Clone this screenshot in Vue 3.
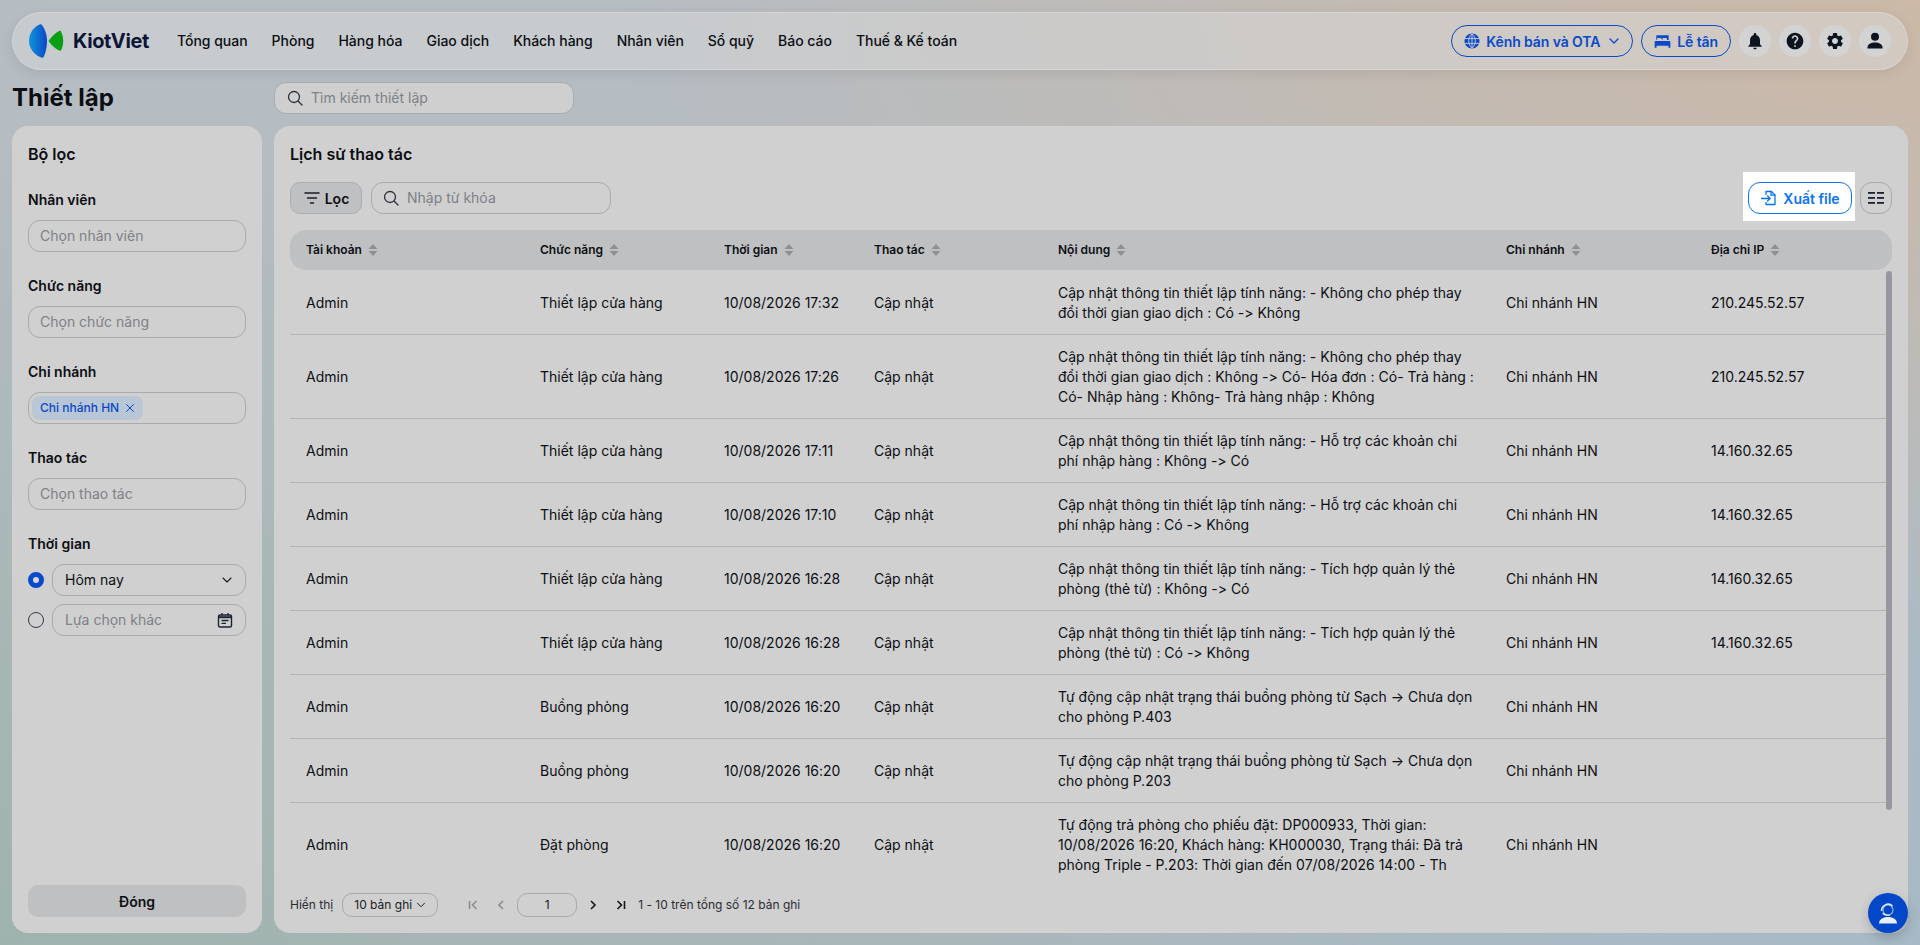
<template>
  <div class="page">
    <!-- Top nav -->
    <header class="topbar">
      <div class="logo">
        <svg width="36" height="36" viewBox="0 0 36 36">
          <defs>
            <linearGradient id="lgBlue" x1="0" x2="1" y1="0" y2="0">
              <stop offset="0" stop-color="#1196d8" />
              <stop offset="1" stop-color="#0a46c8" />
            </linearGradient>
          </defs>
          <path d="M12 1C5 3 0 10 0 18c0 8 6 15 14 17 2.500-4 4-11 4-17 0-7-2.500-13-6-17z" fill="url(#lgBlue)" />
          <path d="M19.500 18c3.500-5 7.500-9 12-10.500 2 3.500 2.700 7 2.700 10.500s-.7 7-2.700 10c-4.500-1.500-8.500-5-12-10z" fill="#05a014" />
        </svg>
        <span class="logo-text">KiotViet</span>
      </div>
      <nav class="nav">
        <a v-for="item in navItems" :key="item" class="nav-item">{{ item }}</a>
      </nav>
      <div class="top-actions">
        <button class="pill">
          <svg width="16" height="16" viewBox="0 0 18 18">
            <circle cx="9" cy="9" r="8.500" fill="#0a49c9" />
            <path d="M1 6.300h16M1 11.700h16M9 1v16M9 1c-5 4-5 12 0 16M9 1c5 4 5 12 0 16" stroke="#d2d2d2" stroke-width="1" fill="none" />
          </svg>
          Kênh bán và OTA
          <svg width="12" height="12" viewBox="0 0 12 12" class="pill-chev">
            <path d="M2 4l4 4 4-4" stroke="#0a49c9" stroke-width="1.300" fill="none" stroke-linecap="round" stroke-linejoin="round" />
          </svg>
        </button>
        <button class="pill">
          <svg width="17" height="17" viewBox="0 0 18 18" fill="#0a49c9">
            <path d="M2.500 2.500h13v5h-1.800V6.200a1 1 0 0 0-1-1H10a1 1 0 0 0-1 1V7.500a1 1 0 0 0-1-1V6.200a1 1 0 0 0-1-1H4.300a1 1 0 0 0-1 1v1.300H2.500z" />
            <path d="M1.500 8.500h15a1 1 0 0 1 .8 1v6h-2v-2H2.700v2H.7v-6a1 1 0 0 1 .8-1z" />
          </svg>
          Lễ tân
        </button>
        <button class="round">
          <svg width="20" height="20" viewBox="0 0 24 24" fill="#0d1420"><path d="M12 22c1.100 0 2-.9 2-2h-4c0 1.100.9 2 2 2zm6-6v-5c0-3.070-1.630-5.640-4.500-6.320V4c0-.83-.67-1.500-1.500-1.500s-1.500.67-1.500 1.500v.68C7.640 5.360 6 7.920 6 11v5l-2 2v1h16v-1l-2-2z" /></svg>
        </button>
        <button class="round">
          <svg width="20" height="20" viewBox="0 0 24 24" fill="#0d1420"><path d="M12 2C6.480 2 2 6.480 2 12s4.480 10 10 10 10-4.480 10-10S17.520 2 12 2zm1 17h-2v-2h2v2zm2.070-7.750l-.9.92C13.450 12.900 13 13.500 13 15h-2v-.5c0-1.100.45-2.100 1.170-2.830l1.240-1.260c.37-.36.59-.86.59-1.410 0-1.100-.9-2-2-2s-2 .9-2 2H8c0-2.210 1.790-4 4-4s4 1.790 4 4c0 .88-.36 1.680-.93 2.250z" /></svg>
        </button>
        <button class="round">
          <svg width="20" height="20" viewBox="0 0 24 24" fill="#0d1420"><path d="M19.140 12.940c.04-.3.06-.61.06-.94 0-.32-.02-.64-.07-.94l2.030-1.580c.18-.14.23-.41.12-.61l-1.920-3.320c-.12-.22-.37-.29-.59-.22l-2.390.96c-.5-.38-1.030-.7-1.620-.94l-.36-2.540c-.04-.24-.24-.41-.48-.41h-3.840c-.24 0-.43.17-.47.41l-.36 2.540c-.59.24-1.130.57-1.620.94l-2.390-.96c-.22-.08-.47 0-.59.22L2.740 8.870c-.12.21-.08.47.12.61l2.030 1.580c-.05.3-.09.63-.09.94s.02.64.07.94l-2.030 1.580c-.18.14-.23.41-.12.61l1.920 3.320c.12.22.37.29.59.22l2.390-.96c.5.38 1.030.7 1.620.94l.36 2.540c.05.24.24.41.48.41h3.840c.24 0 .44-.17.47-.41l.36-2.540c.59-.24 1.130-.56 1.620-.94l2.390.96c.22.08.47 0 .59-.22l1.920-3.320c.12-.22.07-.47-.12-.61l-2.010-1.580zM12 15.600c-1.980 0-3.600-1.620-3.600-3.600s1.620-3.600 3.600-3.600 3.600 1.620 3.600 3.600-1.620 3.600-3.600 3.600z" /></svg>
        </button>
        <button class="round">
          <svg width="20" height="20" viewBox="0 0 20 20" fill="#0d1420">
            <circle cx="10" cy="5.800" r="4" />
            <path d="M2.500 17.500v-1.300c0-3 3.500-4.700 7.500-4.700s7.500 1.700 7.500 4.700v1.300z" />
          </svg>
        </button>
      </div>
    </header>

    <!-- Title row -->
    <div class="title-row">
      <h1 class="page-title">Thiết lập</h1>
      <div class="search search-top">
        <svg width="18" height="18" viewBox="0 0 18 18" fill="none"><circle cx="8" cy="8" r="5.500" stroke="#2b2f38" stroke-width="1.300" /><path d="M12.200 12.200L16 16" stroke="#2b2f38" stroke-width="1.300" stroke-linecap="round" /></svg>
        <span class="placeholder">Tìm kiếm thiết lập</span>
      </div>
    </div>

    <div class="content">
      <!-- Filter sidebar -->
      <aside class="sidebar">
        <h2 class="panel-title">Bộ lọc</h2>
        <div class="filters">
          <div class="field">
            <label class="field-label">Nhân viên</label>
            <div class="input"><span class="placeholder">Chọn nhân viên</span></div>
          </div>
          <div class="field">
            <label class="field-label">Chức năng</label>
            <div class="input"><span class="placeholder">Chọn chức năng</span></div>
          </div>
          <div class="field">
            <label class="field-label">Chi nhánh</label>
            <div class="input input-tags">
              <span class="tag">
                Chi nhánh HN
                <svg width="10" height="10" viewBox="0 0 10 10"><path d="M1.500 1.500l7 7M8.500 1.500l-7 7" stroke="#0a49c9" stroke-width="1" stroke-linecap="round" /></svg>
              </span>
            </div>
          </div>
          <div class="field">
            <label class="field-label">Thao tác</label>
            <div class="input"><span class="placeholder">Chọn thao tác</span></div>
          </div>
          <div class="field">
            <label class="field-label">Thời gian</label>
            <div class="time-row">
              <span class="radio radio-on"></span>
              <div class="input input-between">
                <span class="value">Hôm nay</span>
                <svg width="12" height="12" viewBox="0 0 12 12"><path d="M2 4l4 4 4-4" stroke="#1a1d24" stroke-width="1.100" fill="none" stroke-linecap="round" stroke-linejoin="round" /></svg>
              </div>
            </div>
            <div class="time-row">
              <span class="radio"></span>
              <div class="input input-between">
                <span class="placeholder">Lựa chọn khác</span>
                <svg width="16" height="16" viewBox="0 0 16 16" fill="none">
                  <rect x="1.500" y="3" width="13" height="12" rx="1.500" stroke="#1a2330" stroke-width="1.400" />
                  <path d="M1.500 5.200h13" stroke="#1a2330" stroke-width="2" />
                  <path d="M5 1v2.500M11 1v2.500M4.500 8.500h7M4.500 11.300h4.500" stroke="#1a2330" stroke-width="1.300" />
                </svg>
              </div>
            </div>
          </div>
        </div>
        <button class="close-btn">Đóng</button>
      </aside>

      <!-- Main panel -->
      <main class="panel">
        <h2 class="panel-title">Lịch sử thao tác</h2>
        <div class="toolbar">
          <button class="filter-btn">
            <svg width="18" height="18" viewBox="0 0 18 18"><path d="M2 4h14M4.500 9h9M7.500 14h3" stroke="#1a1d24" stroke-width="1.500" stroke-linecap="round" /></svg>
            Lọc
          </button>
          <div class="search search-table">
            <svg width="18" height="18" viewBox="0 0 18 18" fill="none"><circle cx="8" cy="8" r="5.500" stroke="#2b2f38" stroke-width="1.300" /><path d="M12.200 12.200L16 16" stroke="#2b2f38" stroke-width="1.300" stroke-linecap="round" /></svg>
            <span class="placeholder">Nhập từ khóa</span>
          </div>
          <div class="toolbar-right">
            <div class="highlight">
              <button class="export-btn">
                <svg width="18" height="18" viewBox="0 0 18 18" fill="none">
                  <path d="M6 6V2.500h5.500L15 6v9.500H6V13" stroke="#0a74f0" stroke-width="1.300" stroke-linejoin="round" />
                  <path d="M11 2.500V6.200h4M1.500 9.500h8.500M7.500 7l2.700 2.500L7.500 12" stroke="#0a74f0" stroke-width="1.300" stroke-linecap="round" stroke-linejoin="round" />
                </svg>
                Xuất file
              </button>
            </div>
            <button class="grid-btn">
              <svg width="16" height="14" viewBox="0 0 16 14" fill="#1a2232">
                <rect x="0" y="1" width="7" height="1.800" /><rect x="9" y="1" width="7" height="1.800" />
                <rect x="0" y="6" width="7" height="1.800" /><rect x="9" y="6" width="7" height="1.800" />
                <rect x="0" y="11" width="7" height="1.800" /><rect x="9" y="11" width="7" height="1.800" />
              </svg>
            </button>
          </div>
        </div>

        <div class="table">
          <div class="thead">
            <div v-for="col in columns" :key="col" class="th">
              {{ col }}
              <svg width="10" height="12" viewBox="0 0 10 12" fill="#8e9095"><path d="M5 0l4.500 5H.5zM5 12L.5 7h9z" /></svg>
            </div>
          </div>
          <div class="tbody">
            <div v-for="(row, i) in rows" :key="i" class="tr">
              <div class="td">Admin</div>
              <div class="td">{{ row.feature }}</div>
              <div class="td">{{ row.time }}</div>
              <div class="td">Cập nhật</div>
              <div class="td td-text">{{ row.text }}</div>
              <div class="td">Chi nhánh HN</div>
              <div class="td">{{ row.ip }}</div>
            </div>
            <div class="scroll-thumb"></div>
          </div>
        </div>

        <footer class="pager">
          <span>Hiển thị</span>
          <div class="page-size">
            10 bản ghi
            <svg width="10" height="10" viewBox="0 0 10 10"><path d="M1.500 3.200L5 6.800l3.500-3.600" stroke="#1a1d24" stroke-width="1" fill="none" stroke-linecap="round" /></svg>
          </div>
          <div class="pager-nav">
            <svg width="16" height="16" viewBox="0 0 16 16" fill="none"><path d="M4.500 4v8M11.500 4L7.500 8l4 4" stroke="#8a8c92" stroke-width="1.600" /></svg>
            <svg class="nav-near" width="16" height="16" viewBox="0 0 16 16" fill="none"><path d="M10 4L6 8l4 4" stroke="#8a8c92" stroke-width="1.600" /></svg>
            <div class="page-input">1</div>
            <svg width="16" height="16" viewBox="0 0 16 16" fill="none"><path d="M6 4l4 4-4 4" stroke="#14161c" stroke-width="1.600" /></svg>
            <svg class="nav-near" width="16" height="16" viewBox="0 0 16 16" fill="none"><path d="M4.500 4l4 4-4 4M11.500 4v8" stroke="#14161c" stroke-width="1.600" /></svg>
          </div>
          <span class="pager-total">1 - 10 trên tổng số 12 bản ghi</span>
        </footer>

        <button class="fab">
          <svg width="24" height="24" viewBox="0 0 24 24" fill="none">
            <circle cx="12" cy="9" r="5" stroke="#9dbcf0" stroke-width="1.100" />
            <path d="M5.500 10a6.500 6.500 0 0 1 11-5" stroke="#e9eef8" stroke-width="1.400" />
            <path d="M7 12.500c1.500 1.500 3.500 2 6.500 1.500" stroke="#e9eef8" stroke-width="1.200" stroke-linecap="round" />
            <path d="M3 22.500c0-4 4-6.500 9-6.500s9 2.500 9 6.500z" fill="#e9eef8" />
          </svg>
        </button>
      </main>
    </div>
  </div>
</template>

<script setup>
const navItems = ['Tổng quan', 'Phòng', 'Hàng hóa', 'Giao dịch', 'Khách hàng', 'Nhân viên', 'Sổ quỹ', 'Báo cáo', 'Thuế & Kế toán']

const columns = ['Tài khoản', 'Chức năng', 'Thời gian', 'Thao tác', 'Nội dung', 'Chi nhánh', 'Địa chỉ IP']

const rows = [
  { feature: 'Thiết lập cửa hàng', time: '10/08/2026 17:32', ip: '210.245.52.57', text: 'Cập nhật thông tin thiết lập tính năng: - Không cho phép thay đổi thời gian giao dịch : Có -> Không' },
  { feature: 'Thiết lập cửa hàng', time: '10/08/2026 17:26', ip: '210.245.52.57', text: 'Cập nhật thông tin thiết lập tính năng: - Không cho phép thay đổi thời gian giao dịch : Không -> Có- Hóa đơn : Có- Trả hàng : Có- Nhập hàng : Không- Trả hàng nhập : Không' },
  { feature: 'Thiết lập cửa hàng', time: '10/08/2026 17:11', ip: '14.160.32.65', text: 'Cập nhật thông tin thiết lập tính năng: - Hỗ trợ các khoản chi phí nhập hàng : Không -> Có' },
  { feature: 'Thiết lập cửa hàng', time: '10/08/2026 17:10', ip: '14.160.32.65', text: 'Cập nhật thông tin thiết lập tính năng: - Hỗ trợ các khoản chi phí nhập hàng : Có -> Không' },
  { feature: 'Thiết lập cửa hàng', time: '10/08/2026 16:28', ip: '14.160.32.65', text: 'Cập nhật thông tin thiết lập tính năng: - Tích hợp quản lý thẻ phòng (thẻ từ) : Không -> Có' },
  { feature: 'Thiết lập cửa hàng', time: '10/08/2026 16:28', ip: '14.160.32.65', text: 'Cập nhật thông tin thiết lập tính năng: - Tích hợp quản lý thẻ phòng (thẻ từ) : Có -> Không' },
  { feature: 'Buồng phòng', time: '10/08/2026 16:20', ip: '', text: 'Tự động cập nhật trạng thái buồng phòng từ Sạch → Chưa dọn cho phòng P.403' },
  { feature: 'Buồng phòng', time: '10/08/2026 16:20', ip: '', text: 'Tự động cập nhật trạng thái buồng phòng từ Sạch → Chưa dọn cho phòng P.203' },
  { feature: 'Đặt phòng', time: '10/08/2026 16:20', ip: '', text: 'Tự động trả phòng cho phiếu đặt: DP000933, Thời gian: 10/08/2026 16:20, Khách hàng: KH000030, Trạng thái: Đã trả phòng Triple - P.203: Thời gian đến 07/08/2026 14:00 - Th' },
]
</script>

<style>
html,
body {
  margin: 0;
  overflow: hidden;
}
</style>

<style scoped>
.page {
  box-sizing: border-box;
  height: 100vh;
  padding: 12px;
  display: flex;
  flex-direction: column;
  font-family: 'Inter', sans-serif;
  font-size: 14px;
  line-height: 20px;
  font-variant-ligatures: none;
  font-feature-settings: 'calt' 0;
  color: #0c0e13;
  background:
    radial-gradient(ellipse at 100% 0, #ccb9a7 0, rgba(204, 185, 167, 0) 48%),
    radial-gradient(ellipse at 0 100%, #9fb3ae 0, rgba(159, 179, 174, 0) 60%),
    radial-gradient(ellipse at 100% 100%, #a7b9c6 0, rgba(167, 185, 198, 0) 60%),
    #b5bcc2;
}

button {
  font-family: inherit;
  font-feature-settings: inherit;
  cursor: pointer;
}

/* Top bar */
.topbar {
  box-sizing: border-box;
  height: 58px;
  flex: none;
  display: flex;
  align-items: center;
  padding: 0 16px;
  border-radius: 29px;
  border: 1px solid rgba(255, 255, 255, 0.22);
  background: rgba(218, 218, 218, 0.5);
  box-shadow: 0 4px 12px rgba(80, 80, 80, 0.12);
}
.logo {
  display: flex;
  align-items: center;
  gap: 8px;
  width: 148px;
  flex: none;
}
.logo-text {
  font-size: 20px;
  font-weight: 700;
  letter-spacing: -0.4px;
  color: #0b1538;
}
.nav {
  display: flex;
  gap: 24px;
}
.nav-item {
  font-weight: 500;
  color: #0c0e13;
  white-space: nowrap;
  letter-spacing: -0.02px;
}
.top-actions {
  margin-left: auto;
  display: flex;
  align-items: center;
  gap: 8px;
}
.pill {
  box-sizing: border-box;
  height: 32px;
  padding: 0 12px;
  display: flex;
  align-items: center;
  gap: 6px;
  border: 1px solid #0a49c9;
  border-radius: 16px;
  background: transparent;
  color: #0a49c9;
  font-size: 14px;
  font-weight: 600;
  letter-spacing: -0.1px;
  white-space: nowrap;
}
.pill-chev {
  margin-left: 2px;
}
.round {
  width: 32px;
  height: 32px;
  padding: 0;
  border: none;
  border-radius: 50%;
  background: #d3d3d3;
  display: flex;
  align-items: center;
  justify-content: center;
}

/* Title row */
.title-row {
  flex: none;
  height: 56px;
  display: flex;
  align-items: center;
}
.page-title {
  width: 262px;
  margin: 0;
  font-size: 24px;
  line-height: 32px;
  font-weight: 700;
}
.search {
  box-sizing: border-box;
  height: 32px;
  display: flex;
  align-items: center;
  gap: 7px;
  padding: 0 10px;
  border: 1px solid #a8aaae;
  border-radius: 12px;
}
.search-top {
  width: 300px;
  background: #cfcfcf;
  padding: 0 11px;
}
.search-table {
  width: 240px;
}
.placeholder {
  color: #7e8187;
  white-space: nowrap;
}

.content {
  flex: 1;
  min-height: 0;
  display: flex;
  gap: 12px;
}

/* Sidebar */
.sidebar {
  box-sizing: border-box;
  width: 250px;
  flex: none;
  padding: 16px;
  border-radius: 16px;
  background: #d0d0d0;
  display: flex;
  flex-direction: column;
}
.panel-title {
  margin: 0;
  font-size: 16px;
  line-height: 24px;
  font-weight: 600;
}
.filters {
  margin-top: 22px;
  display: flex;
  flex-direction: column;
  gap: 22px;
}
.field {
  display: flex;
  flex-direction: column;
  gap: 8px;
}
.field-label {
  font-weight: 600;
  line-height: 24px;
  height: 24px;
}
.input {
  box-sizing: border-box;
  height: 32px;
  display: flex;
  align-items: center;
  padding: 0 11px;
  border: 1px solid #a8aaae;
  border-radius: 12px;
}
.input-tags {
  padding: 0 3px;
}
.input-between {
  flex: 1;
  justify-content: space-between;
  padding: 0 12px;
}
.tag {
  height: 24px;
  padding: 0 8px;
  display: flex;
  align-items: center;
  gap: 6px;
  border-radius: 8px;
  background: #b9c6d6;
  color: #0a49c9;
  font-size: 12px;
  font-weight: 500;
}
.time-row {
  display: flex;
  align-items: center;
  gap: 8px;
}
.radio {
  box-sizing: border-box;
  width: 16px;
  height: 16px;
  border-radius: 50%;
  border: 1px solid #343c4c;
  flex: none;
}
.radio-on {
  border: 5px solid #0a49c9;
  background: #d8d8d8;
}
.close-btn {
  margin-top: auto;
  height: 32px;
  border: none;
  border-radius: 10px;
  background: #bfc0c2;
  color: #0c0e13;
  font-size: 14px;
  font-weight: 600;
}

/* Main panel */
.panel {
  position: relative;
  flex: 1;
  min-width: 0;
  box-sizing: border-box;
  padding: 16px 16px 0;
  border-radius: 16px;
  background: #d0d0d0;
  display: flex;
  flex-direction: column;
}
.toolbar {
  margin-top: 16px;
  height: 32px;
  display: flex;
  align-items: center;
  gap: 9px;
}
.filter-btn {
  box-sizing: border-box;
  width: 72px;
  height: 32px;
  padding: 0;
  display: flex;
  align-items: center;
  justify-content: center;
  gap: 4px;
  border: 1px solid #acaeb2;
  border-radius: 10px;
  background: #bfc0c2;
  color: #0c0e13;
  font-size: 14px;
  font-weight: 600;
}
.toolbar-right {
  margin-left: auto;
  display: flex;
  align-items: center;
  gap: 8px;
}
.highlight {
  margin: -10px -3px -7px -5px;
  padding: 10px 3px 7px 5px;
  background: #fff;
}
.export-btn {
  box-sizing: border-box;
  width: 104px;
  height: 32px;
  padding: 0;
  display: flex;
  align-items: center;
  justify-content: center;
  gap: 5px;
  border: 1px solid #0a74f0;
  border-radius: 12px;
  background: #fff;
  color: #0a74f0;
  font-size: 14px;
  font-weight: 600;
}
.grid-btn {
  box-sizing: border-box;
  width: 32px;
  height: 32px;
  padding: 0;
  display: flex;
  align-items: center;
  justify-content: center;
  border: 1px solid #a8aaae;
  border-radius: 12px;
  background: transparent;
}

/* Table */
.table {
  margin-top: 16px;
  flex: 1;
  min-height: 0;
  display: flex;
  flex-direction: column;
}
.thead,
.tr {
  display: grid;
  grid-template-columns: 234px 184px 150px 184px 448px 205px 1fr;
}
.thead {
  flex: none;
  height: 40px;
  margin-bottom: 1px;
  border-radius: 16px;
  background: #bfc0c2;
  align-items: center;
}
.th {
  padding: 0 16px;
  display: flex;
  align-items: center;
  gap: 6px;
  font-size: 12px;
  font-weight: 600;
}
.tbody {
  position: relative;
  height: 609px;
  overflow: hidden;
}
.tr {
  align-items: center;
  border-bottom: 1px solid #b4b5b7;
  margin-right: 6px;
}
.td {
  padding: 0 16px;
  font-size: 14px;
}
.td-text {
  padding: 12px 16px 11px;
}
.scroll-thumb {
  position: absolute;
  top: 0;
  right: 0;
  width: 6px;
  height: 539px;
  border-radius: 3px;
  background: #96989f;
}

/* Pager */
.pager {
  position: absolute;
  left: 16px;
  bottom: 16px;
  display: flex;
  align-items: center;
  font-size: 12px;
  color: #2a2c32;
}
.page-size {
  box-sizing: border-box;
  margin-left: 9px;
  width: 96px;
  height: 24px;
  display: flex;
  align-items: center;
  justify-content: center;
  gap: 4px;
  border: 1px solid #a8aaae;
  border-radius: 10px;
  color: #1a1d24;
}
.pager-nav {
  margin-left: 27px;
  display: flex;
  align-items: center;
  gap: 8px;
}
.nav-near {
  margin-left: 4px;
}
.page-input {
  box-sizing: border-box;
  width: 60px;
  height: 24px;
  display: flex;
  align-items: center;
  justify-content: center;
  border: 1px solid #a8aaae;
  border-radius: 10px;
  color: #1a1d24;
}
.pager-total {
  margin-left: 9px;
}
.fab {
  position: absolute;
  right: 0;
  bottom: 0;
  width: 40px;
  height: 40px;
  padding: 0;
  border: none;
  border-radius: 50%;
  background: #0347c8;
  box-shadow: 0 4px 12px rgba(0, 0, 0, 0.2);
  display: flex;
  align-items: center;
  justify-content: center;
}
</style>
